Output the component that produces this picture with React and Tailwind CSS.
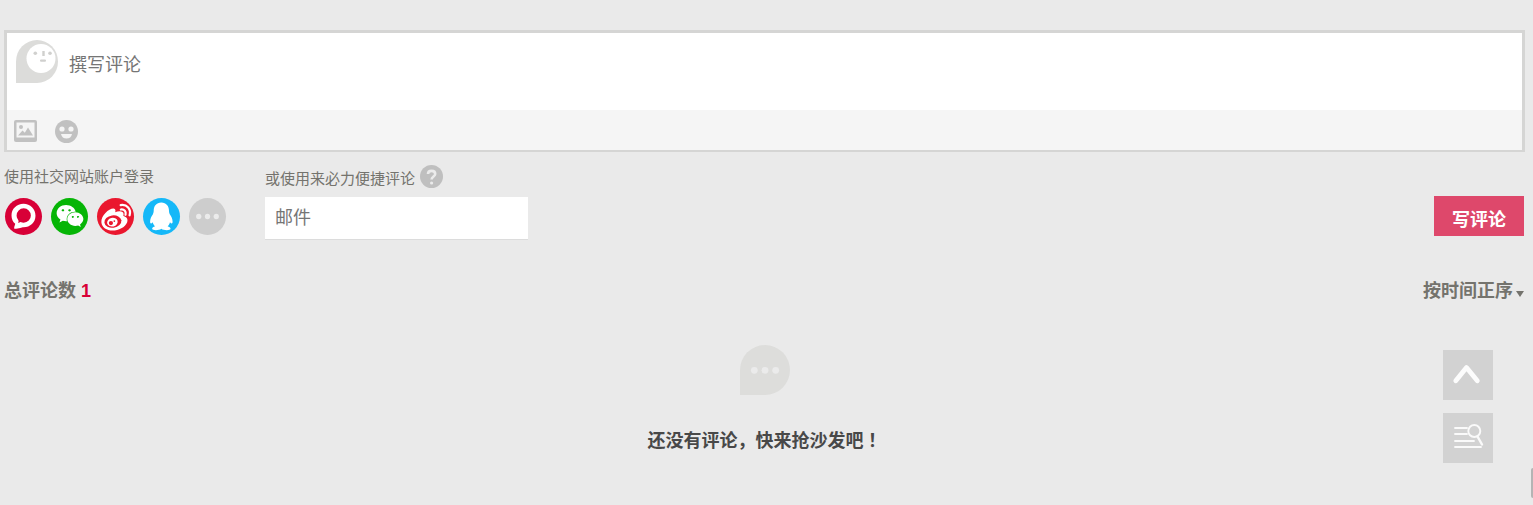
import React from 'react';
import { FaWeixin } from 'react-icons/fa';

function Avatar() {
  return (
    <svg className="h-[43px] w-[42px] shrink-0" viewBox="0 0 42 43" aria-hidden="true">
      <path d="M0 43V21.500A21 21.500 0 1 1 21 43Z" fill="#dcdcda" />
      <circle cx="25" cy="18.500" r="14.500" fill="#fff" />
      <circle cx="19.300" cy="13.300" r="1.800" fill="#d0d0ce" />
      <circle cx="34" cy="13.300" r="1.800" fill="#d0d0ce" />
      <rect x="26.300" y="11" width="2.400" height="5" fill="#d0d0ce" />
      <rect x="24" y="19.500" width="6" height="2.200" rx="1" fill="#d0d0ce" />
    </svg>
  );
}

function PhotoIcon() {
  return (
    <svg className="h-[22px] w-[23px]" viewBox="0 0 23 22" aria-hidden="true">
      <rect width="23" height="22" rx="2" fill="#c1c1c1" />
      <rect x="2.500" y="2.500" width="18" height="15" fill="#f5f5f5" />
      <circle cx="7" cy="7" r="2" fill="#c1c1c1" />
      <path d="M4 15.500L8.500 10.500L10.800 12.800L14 7.500L19 15.500Z" fill="#c1c1c1" />
    </svg>
  );
}

function SmileIcon() {
  return (
    <svg className="h-[23px] w-[23px]" viewBox="0 0 23 23" aria-hidden="true">
      <circle cx="11.500" cy="11.500" r="11.500" fill="#c1c1c1" />
      <circle cx="7" cy="9" r="2.600" fill="#f5f5f5" />
      <circle cx="16" cy="9" r="2.600" fill="#f5f5f5" />
      <path d="M6 14H17Q16 18.500 11.500 18.500T6 14Z" fill="#f5f5f5" />
    </svg>
  );
}

function LivereIcon() {
  return (
    <svg className="h-[37px] w-[37px]" viewBox="0 0 38 38" aria-hidden="true">
      <path
        fillRule="evenodd"
        d="M19 6C26 6 31.300 11.300 31.300 18.200S26 30 19 30C17 30 15 31.500 9.500 31.500C9 29.500 10.500 28 10.500 26.500C8 24.500 6.700 21.500 6.700 18C6.700 11.300 12 6 19 6ZM19.200 10.600A7.300 7.300 0 0 0 11.900 18C11.900 20.500 13.400 22 14 23.500L13.500 25.800L16 24.700C17 25.100 18 25.300 19.200 25.300A7.350 7.350 0 0 0 19.200 10.600Z"
        fill="#fff"
      />
    </svg>
  );
}

function WeiboIcon() {
  return (
    <svg className="h-[37px] w-[37px]" viewBox="0 0 38 38" aria-hidden="true">
      <path
        d="M4.500 25C4 18 12.500 10.500 17 10.800C19.300 11.200 19.200 13 18.700 14.700C22 13.200 27.300 13 27.300 16.500C27.300 17.500 26.800 18.200 27.300 18.500C30.500 19.500 32 21.500 31 25C29 30.300 22 33.500 16 33.500C10 33.500 5 30.500 4.500 25Z"
        fill="#fff"
      />
      <ellipse cx="16.300" cy="24.200" rx="8.800" ry="6.300" transform="rotate(-8 16.300 24.200)" fill="#ea172e" />
      <ellipse cx="15.800" cy="24.800" rx="5.500" ry="4.500" transform="rotate(-15 15.800 24.800)" fill="#fff" />
      <circle cx="14.300" cy="25.800" r="2.200" fill="#ea172e" />
      <circle cx="17.800" cy="23.700" r="0.900" fill="#ea172e" />
      <path d="M24.500 11.800C28 11.300 30.300 13.800 29.300 17.200M24.300 7.300C30.800 6.200 35.300 11.500 33.500 17.700" fill="none" stroke="#fff" strokeWidth="2.300" strokeLinecap="round" />
    </svg>
  );
}

function QqIcon() {
  return (
    <svg className="h-[37px] w-[37px]" viewBox="0 0 38 38" aria-hidden="true">
      <path
        d="M18.800 4.700C13.700 4.700 11 8.500 11 13C11 14.500 10.500 15.500 10.200 16.800C8.500 19.200 7.300 21.500 7.300 24.500C7.300 26.700 8.600 26.800 10 24.800C10.400 26.500 11.200 27.800 12.400 29C10.900 29.600 9.200 30.400 9.400 31.700C9.800 33.800 16.500 33.600 18.800 31.700C21.100 33.600 27.900 33.800 28.300 31.700C28.500 30.400 26.700 29.600 25.300 29C26.500 27.800 27.300 26.500 27.700 24.800C29.100 26.800 30.400 26.700 30.400 24.500C30.400 21.500 29.200 19.200 27.500 16.800C27.100 15.500 26.700 14.500 26.700 13C26.700 8.500 23.900 4.700 18.800 4.700Z"
        fill="#fff"
      />
    </svg>
  );
}

function MoreIcon() {
  return (
    <svg className="h-[37px] w-[37px]" viewBox="0 0 38 38" aria-hidden="true">
      <g fill="#ebebeb">
        <circle cx="10" cy="19" r="2.700" />
        <circle cx="19" cy="19" r="2.700" />
        <circle cx="28" cy="19" r="2.700" />
      </g>
    </svg>
  );
}

const accounts = [
  { name: '来必力', bg: 'bg-[#d80037]', icon: <LivereIcon /> },
  { name: '微信', bg: 'bg-[#06b506]', icon: <FaWeixin className="mb-[2px] h-[28px] w-[28px]" /> },
  { name: '微博', bg: 'bg-[#ea172e]', icon: <WeiboIcon /> },
  { name: 'QQ', bg: 'bg-[#15b8f8]', icon: <QqIcon /> },
  { name: '更多', bg: 'bg-[#cdcdcd]', icon: <MoreIcon /> },
];

export default function App() {
  return (
    <div className="min-h-screen bg-[#eaeaea] pt-[30px] pr-2 pb-12 pl-1 font-['Liberation_Sans','Noto_Sans_CJK_SC',sans-serif] text-[#74736d]">
      <form onSubmit={(e) => e.preventDefault()}>
        <div className="border-3 border-b-2 border-[#d5d5d4] bg-white">
          <div className="flex h-[77px] gap-[11px] pt-[7px] pl-[9px]">
            <Avatar />
            <textarea
              aria-label="撰写评论"
              placeholder="撰写评论"
              className="block flex-1 resize-none overflow-hidden pt-[11px] text-[18px] leading-7 outline-none placeholder:text-[#757575]"
            />
          </div>
          <div className="flex h-10 items-center gap-[18px] bg-[#f5f5f5] pt-[2px] pl-[7px]">
            <button type="button" aria-label="图片"><PhotoIcon /></button>
            <button type="button" aria-label="表情"><SmileIcon /></button>
          </div>
        </div>

        <div className="flex items-start pt-3">
          <div className="w-[261px]">
            <p className="pt-px text-[15px] leading-6">使用社交网站账户登录</p>
            <div className="flex gap-[9px] pt-[9px] pl-px">
              {accounts.map((a) => (
                <button
                  key={a.name}
                  type="button"
                  aria-label={a.name}
                  className={`flex h-[37px] w-[37px] items-center justify-center rounded-full text-white ${a.bg}`}
                >
                  {a.icon}
                </button>
              ))}
            </div>
          </div>
          <div className="w-[263px]">
            <div className="flex items-start gap-[5px]">
              <label htmlFor="mail" className="pt-[3px] text-[15px] leading-6">或使用来必力便捷评论</label>
              <button type="button" aria-label="帮助" className="pt-px">
                <svg className="h-[23px] w-[23px]" viewBox="0 0 23 23" aria-hidden="true">
                  <circle cx="11.500" cy="11.500" r="11.500" fill="#bfbfbf" />
                  <path d="M8 9C8 4.800 15.200 4.800 15.200 9C15.200 11.600 11.600 11.400 11.600 14.500" fill="none" stroke="#ebebeb" strokeWidth="2.600" />
                  <circle cx="11.600" cy="18" r="1.600" fill="#ebebeb" />
                </svg>
              </button>
            </div>
            <input
              id="mail"
              type="email"
              placeholder="邮件"
              className="mt-[6px] block h-[43px] w-full border-b border-[#dcdcdc] bg-white px-[10px] text-[18px] outline-none placeholder:text-[#757575]"
            />
          </div>
          <button type="submit" className="mt-8 mr-px ml-auto h-10 w-[90px] bg-[#de486b] pt-2 text-[18px] leading-8 font-bold text-white">
            写评论
          </button>
        </div>
      </form>

      <div className="flex items-center justify-between pt-[37px] text-[18px] leading-7 font-bold">
        <h2>
          总评论数 <span className="text-[#d80037]">1</span>
        </h2>
        <div className="relative">
          <select aria-label="排序" className="block appearance-none bg-transparent pr-3 outline-none">
            <option>按时间正序</option>
          </select>
          <svg className="pointer-events-none absolute right-px bottom-2 h-[6px] w-2" viewBox="0 0 8 6" aria-hidden="true">
            <path d="M0 0H8L4 6Z" fill="#74736d" />
          </svg>
        </div>
      </div>

      <div className="flex flex-col items-center pt-10">
        <svg className="h-[50px] w-[50px]" viewBox="0 0 50 50" aria-hidden="true">
          <path d="M0 50V25A25 25 0 1 1 25 50Z" fill="#dddddb" />
          <g fill="#ebebeb">
            <circle cx="14.300" cy="25.300" r="3.400" />
            <circle cx="25" cy="25.300" r="3.400" />
            <circle cx="35.700" cy="25.300" r="3.400" />
          </g>
        </svg>
        <p className="pt-[30px] text-[18px] leading-7 font-bold text-[#484848]">
          还没有评论，快来抢沙发吧<span className="font-['Noto_Sans_CJK_TC',sans-serif]">！</span>
        </p>
      </div>

      <nav className="fixed right-10 bottom-[42px] flex flex-col gap-[13px]">
        <button type="button" aria-label="返回顶部" className="h-[50px] w-[50px] bg-[#d2d2d2]">
          <svg className="h-[50px] w-[50px]" viewBox="0 0 50 50" aria-hidden="true">
            <path d="M12.800 30.800L23.500 17.500L34.300 30.800" fill="none" stroke="#fcfcfc" strokeWidth="4.800" strokeLinecap="round" strokeLinejoin="round" />
          </svg>
        </button>
        <button type="button" aria-label="目录" className="h-[50px] w-[50px] bg-[#d2d2d2]">
          <svg className="h-[50px] w-[50px]" viewBox="0 0 50 50" aria-hidden="true">
            <g fill="none" stroke="#fafafa" strokeWidth="1.900" strokeLinecap="round">
              <path d="M12 15H24M12 21H24M12 28H31M12 34H38" />
              <circle cx="31.300" cy="18" r="6" />
              <path d="M34.500 23.500L39 31.500" strokeWidth="2.400" />
            </g>
          </svg>
        </button>
      </nav>
      <div className="fixed right-0 bottom-[7px] h-[30px] w-[2px] rounded-l-sm bg-[#b4b4b4]" />
    </div>
  );
}
